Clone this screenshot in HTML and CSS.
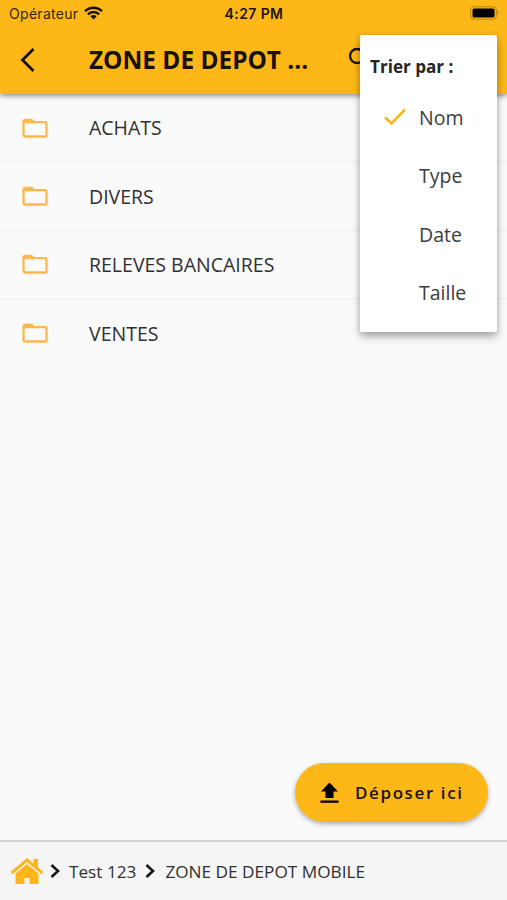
FILE: index.html
```html
<!DOCTYPE html>
<html lang="fr">
<head>
<meta charset="utf-8">
<title>Zone de dépôt</title>
<link rel="stylesheet" href="styles.css">
</head>
<body>
<div class="app">
  <header class="header">
    <div class="status">
      <div class="carrier"><span>Opérateur</span>
        <svg class="wifi" width="19" height="14" viewBox="0 0 19 14" fill="none" stroke="#171104" stroke-width="2.5"><path d="M1 5.200C5.700.5 13.300.5 18 5.200M4 8.400C7 5.300 12 5.300 15 8.400"/><path d="M9.500 13.500L6.300 10.300Q9.500 7.800 12.700 10.300Z" fill="#171104" stroke="none"/></svg>
      </div>
      <span class="time">4:27 PM</span>
      <svg class="battery" width="30" height="14" viewBox="0 0 30 14"><rect x=".7" y=".7" width="25.600" height="12.600" rx="3.500" fill="none" stroke="#b98613" stroke-width="1.100"/><rect x="2.500" y="2.500" width="22" height="9" rx="1.500" fill="#000"/><path d="M27.500 4.800Q30 7 27.500 9.200Z" fill="#b98613"/></svg>
    </div>
    <div class="toolbar">
      <svg class="back" width="18" height="26" viewBox="0 0 18 26" fill="none" stroke="#171104" stroke-width="2.800"><path d="M14.500 2L3.500 13L14.500 24"/></svg>
      <h1 class="title">ZONE DE DEPOT ...</h1>
      <svg class="search" width="26" height="26" viewBox="0 0 26 26" fill="none" stroke="#171104" stroke-width="2.300"><circle cx="9" cy="9" r="7"/><path d="M14 14L22 22"/></svg>
    </div>
  </header>

  <main class="content">
    <ul class="list">
      <li class="row"><svg class="folder" viewBox="0 0 26 20"><path d="M3 2H9.500L12 4.200H23Q24.500 4.200 24.500 5.700V17Q24.500 18.500 23 18.500H3Q1.500 18.500 1.500 17V3.500Q1.500 2 3 2Z"/><path class="tab" d="M2 1.500H9.500L12 5.200H2Z"/></svg><span>ACHATS</span></li>
      <li class="row"><svg class="folder" viewBox="0 0 26 20"><path d="M3 2H9.500L12 4.200H23Q24.500 4.200 24.500 5.700V17Q24.500 18.500 23 18.500H3Q1.500 18.500 1.500 17V3.500Q1.500 2 3 2Z"/><path class="tab" d="M2 1.500H9.500L12 5.200H2Z"/></svg><span>DIVERS</span></li>
      <li class="row"><svg class="folder" viewBox="0 0 26 20"><path d="M3 2H9.500L12 4.200H23Q24.500 4.200 24.500 5.700V17Q24.500 18.500 23 18.500H3Q1.500 18.500 1.500 17V3.500Q1.500 2 3 2Z"/><path class="tab" d="M2 1.500H9.500L12 5.200H2Z"/></svg><span>RELEVES BANCAIRES</span></li>
      <li class="row"><svg class="folder" viewBox="0 0 26 20"><path d="M3 2H9.500L12 4.200H23Q24.500 4.200 24.500 5.700V17Q24.500 18.500 23 18.500H3Q1.500 18.500 1.500 17V3.500Q1.500 2 3 2Z"/><path class="tab" d="M2 1.500H9.500L12 5.200H2Z"/></svg><span>VENTES</span></li>
    </ul>
  </main>

  <footer class="crumbs">
    <svg class="home" width="34" height="28" viewBox="0 0 34 28" fill="#fdb51b"><path d="M17 1L23.500 6.500V2H28V10.500L33.500 15L31.500 17.300L17 5L2.500 17.300L.5 15Z"/><path d="M17 7L28.500 16.500V26Q28.500 27 27.500 27H19.500V21H14.500V27H6.500Q5.500 27 5.500 26V16.500Z"/></svg>
    <svg class="chev" width="10" height="16" viewBox="0 0 10 16" fill="none" stroke="#171717" stroke-width="2.600"><path d="M1.500 2L8 8L1.500 14"/></svg>
    <span class="parent">Test 123</span>
    <svg class="chev next" width="10" height="16" viewBox="0 0 10 16" fill="none" stroke="#171717" stroke-width="2.600"><path d="M1.500 2L8 8L1.500 14"/></svg>
    <span class="current">ZONE DE DEPOT MOBILE</span>
  </footer>

  <button class="upload">
    <svg width="19" height="22" viewBox="0 0 19 22"><path d="M9.500.5L18 9.500H13.500V16H5.500V9.500H1Z"/><rect x=".5" y="18.500" width="18" height="2.300"/></svg>
    <span>Déposer ici</span>
  </button>

  <div class="menu">
    <div class="menu-title">Trier par :</div>
    <div class="option"><svg class="check" width="24" height="20" viewBox="0 0 24 20" fill="none" stroke="#fdb51b" stroke-width="2.600"><path d="M2 10.500L8.500 16.500L22 2.500"/></svg><span>Nom</span></div>
    <div class="option"><span>Type</span></div>
    <div class="option"><span>Date</span></div>
    <div class="option"><span>Taille</span></div>
  </div>
</div>
</body>
</html>
```

FILE: styles.css
```css
* { box-sizing: border-box; }
body { margin: 0; font-family: "Open Sans", sans-serif; color: #303030; }
.app { position: relative; display: flex; flex-direction: column; width: 507px; height: 900px; overflow: hidden; background: #fafafa; }
.header { position: relative; height: 94px; flex: none; background: #fdb817; box-shadow: 0 2px 5px rgba(0, 0, 0, .42); }
.status { display: grid; grid-template-columns: 1fr auto 1fr; align-items: center; height: 27px; padding: 0 7px 0 9px; font-family: Inter, sans-serif; font-size: 14px; color: #33270b; }
.carrier { display: flex; align-items: center; gap: 6px; letter-spacing: .3px; }
.wifi { margin-top: -2px; }
.time { margin-right: 1px; font-weight: 600; color: #1c1505; letter-spacing: .4px; }
.battery { justify-self: end; margin-top: -1px; }
.toolbar { display: flex; align-items: center; height: 66px; padding-left: 19px; }
.title { width: 250px; margin: 0 0 0 52px; font-size: 24.4px; line-height: 34px; font-weight: 700; color: #171104; white-space: nowrap; }
.search { margin: -1px 0 0 9px; }
.content { flex: 1; }
.list { margin: 0; padding: 0; list-style: none; }
.row { display: flex; align-items: center; gap: 41px; height: 68.4px; padding-left: 22px; border-bottom: 1px solid #f0f0f0; font-size: 19.5px; }
.row:last-child { border-bottom: 0; }
.folder { width: 26px; height: 20px; fill: none; stroke: #ffb74d; stroke-width: 2.3; }
.folder .tab { fill: #ffb74d; stroke: none; }
.crumbs { display: flex; align-items: center; height: 60px; flex: none; padding-left: 10px; border-top: 2px solid #d2d2d2; background: #f5f5f5; font-size: 17.2px; white-space: nowrap; }
.chev { margin-left: 6px; }
.parent { margin-left: 9px; }
.next { margin-left: 9px; }
.current { margin-left: 10px; }
.upload { position: absolute; left: 295px; top: 763px; display: flex; align-items: center; gap: 16px; width: 193px; height: 59px; padding: 0 0 0 25px; border: 0; border-radius: 30px; background: #fdb817; box-shadow: 0 2px 5px rgba(0, 0, 0, .32); font: 600 17px "Open Sans", sans-serif; letter-spacing: 1.6px; color: #171104; white-space: nowrap; }
.menu { position: absolute; left: 360px; top: 35px; width: 137px; height: 297px; padding-top: 18px; border-radius: 2px; background: #fff; box-shadow: 0 5px 8px rgba(0, 0, 0, .28), 0 1px 6px rgba(0, 0, 0, .15); }
.menu-title { height: 35px; padding-left: 10px; font-size: 17.1px; line-height: 28px; font-weight: 700; color: #252525; }
.option { display: grid; grid-template-columns: 24px auto; column-gap: 12px; align-items: center; height: 58.5px; padding-left: 23px; font-size: 19.5px; color: #3c3c3c; }
.option span { grid-column: 2; }
```
